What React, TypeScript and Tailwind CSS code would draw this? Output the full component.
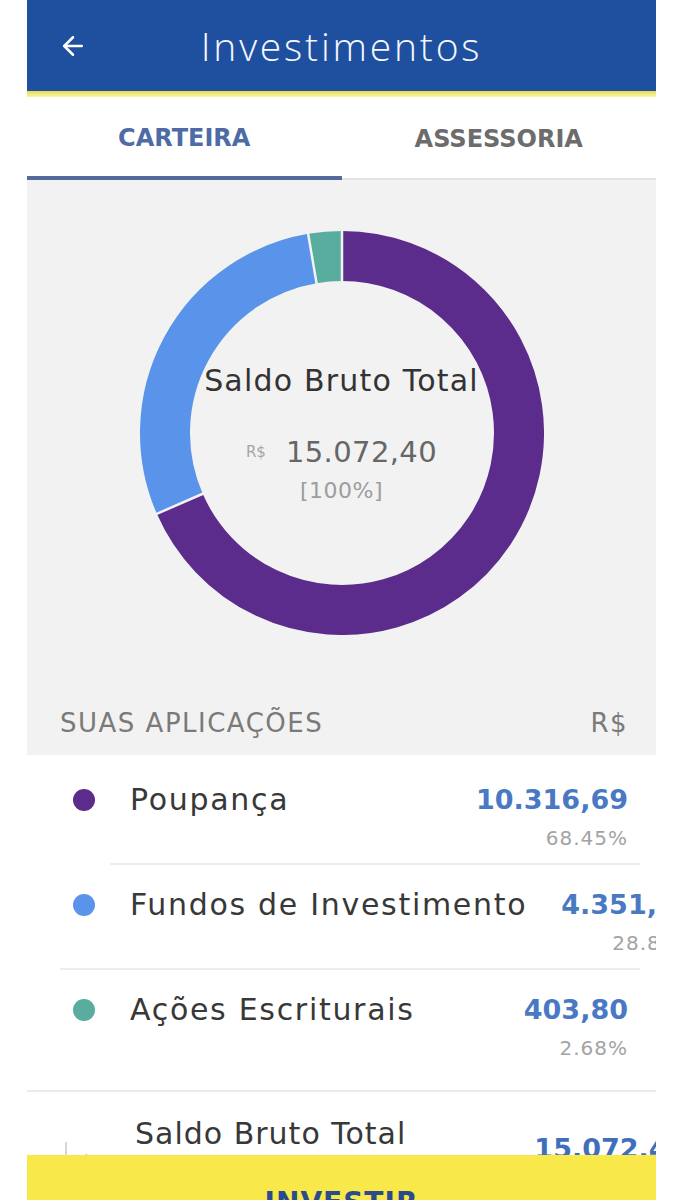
import { ArrowLeft } from "lucide-react";

const slices = [
  { name: "Poupança", color: "#5b2c8b", value: "10.316,69", pct: "68.45%", share: 68.45 },
  { name: "Fundos de Investimento", color: "#5a93ea", value: "4.351,91", pct: "28.87%", share: 28.87 },
  { name: "Ações Escriturais", color: "#58ad9f", value: "403,80", pct: "2.68%", share: 2.68 },
];

// angle in degrees, clockwise from 12 o'clock
function pt(c: number, r: number, a: number) {
  const rad = (a * Math.PI) / 180;
  return [c + r * Math.sin(rad), c - r * Math.cos(rad)];
}

function arc(c: number, r: number, a0: number, a1: number) {
  const [x0, y0] = pt(c, r, a0);
  const [x1, y1] = pt(c, r, a1);
  const large = a1 - a0 > 180 ? 1 : 0;
  return `M ${x0} ${y0} A ${r} ${r} 0 ${large} 1 ${x1} ${y1}`;
}

function Donut() {
  const size = 404;
  const c = size / 2;
  let start = 0;
  const segs = slices.map((s) => {
    const a0 = start;
    const a1 = start + (s.share / 100) * 360;
    start = a1;
    return { ...s, a0, a1 };
  });
  return (
    <svg width={size} height={size} viewBox={`0 0 ${size} ${size}`}>
      {segs.map((s) => (
        <path key={s.name} d={arc(c, 177, s.a0, s.a1)} stroke={s.color} strokeWidth={50} fill="none" />
      ))}
      {segs.map((s) => {
        const [x0, y0] = pt(c, 150, s.a0);
        const [x1, y1] = pt(c, 204, s.a0);
        return <line key={s.name + "-gap"} x1={x0} y1={y0} x2={x1} y2={y1} stroke="#f2f2f2" strokeWidth={2.5} />;
      })}
    </svg>
  );
}

function ChartIcon() {
  return (
    <svg width="30" height="34" viewBox="0 0 30 34" fill="none" stroke="#c9c9c9" strokeWidth="1.5">
      <path d="M4 2 V30 H28" />
      <path d="M6 24 L12 20 L17 22 L25 14" />
    </svg>
  );
}

export default function App() {
  return (
    <div className="min-h-screen bg-white">
      <div className="relative ml-[27px] h-[1200px] w-[629px] overflow-hidden bg-white font-['DejaVu_Sans',sans-serif]">
        {/* header */}
        <div className="relative flex h-[91px] items-center justify-center bg-[#1f4f9f]">
          <ArrowLeft className="absolute left-[31px] top-[31px] text-white" size={30} strokeWidth={2} />
          <h1 className="font-['Open_Sans',sans-serif] text-[39px] font-light leading-none tracking-[2.8px] text-[#f4f7fc]">
            Investimentos
          </h1>
        </div>
        <div className="h-[6px] bg-gradient-to-b from-[#e9dc3c] to-[#f8f3b0]" />

        {/* tabs */}
        <div className="flex h-[83px]">
          <div className="flex flex-1 flex-col">
            <div className="flex flex-1 items-center justify-center pt-[3px] text-[24px] font-bold text-[#4e6ba6]">
              CARTEIRA
            </div>
            <div className="h-[4px] bg-[#55699b]" />
          </div>
          <div className="flex flex-1 flex-col">
            <div className="flex flex-1 items-center justify-center pt-[3px] text-[24px] font-bold text-[#6c6c6c]">
              ASSESSORIA
            </div>
            <div className="h-[2px] bg-[#e3e3e3]" />
          </div>
        </div>

        {/* chart */}
        <div className="bg-[#f2f2f2] pb-[16px] pt-[51px]">
          <div className="relative mx-auto h-[404px] w-[404px]">
            <Donut />
            <div className="absolute inset-0 flex flex-col items-center justify-center">
              <div className="text-[30px] leading-[36px] tracking-[1.2px] text-[#333]">Saldo Bruto Total</div>
              <div className="mt-[36px] flex items-center gap-[20px] leading-[34px]">
                <span className="text-[15px] text-[#a5a5a5]">R$</span>
                <span className="text-[29px] tracking-[0.4px] text-[#666]">15.072,40</span>
              </div>
              <div className="mt-[9px] text-[22px] leading-[26px] tracking-[0.5px] text-[#9d9d9d]">[100%]</div>
            </div>
          </div>
          <div className="mt-[72px] flex items-center justify-between pl-[33px] pr-[28px] text-[26px] leading-[32px] tracking-[1.5px] text-[#7a7a7a]">
            <span>SUAS APLICAÇÕES</span>
            <span>R$</span>
          </div>
        </div>

        {/* list */}
        {slices.map((s, i) => (
          <div key={s.name}>
            <div
              className={
                "flex items-start pl-[46px] pr-[28px] " +
                (i === 0 ? "pt-[29px] pb-[14px]" : i === 1 ? "pt-[24px] pb-[14px]" : "pt-[24px] pb-[31px]")
              }
            >
              <span className="mt-[5px] h-[22px] w-[22px] shrink-0 rounded-full" style={{ backgroundColor: s.color }} />
              <span className="ml-[35px] shrink-0 whitespace-nowrap text-[30px] leading-[32px] tracking-[1.7px] text-[#383838]">
                {s.name}
              </span>
              <div className="ml-auto shrink-0 pl-[34px] text-right">
                <div className="whitespace-nowrap text-[27px] font-bold leading-[32px] text-[#4a79c4]">{s.value}</div>
                <div className="mt-[11px] whitespace-nowrap text-[20px] leading-[22px] tracking-[1px] text-[#a3a3a3]">{s.pct}</div>
              </div>
            </div>
            {i === 0 && <div className="ml-[83px] mr-[16px] h-[2px] bg-[#ececec]" />}
            {i === 1 && <div className="ml-[33px] mr-[16px] h-[2px] bg-[#ececec]" />}
            {i === 2 && <div className="h-[2px] bg-[#ebebeb]" />}
          </div>
        ))}

        {/* total row */}
        <div className="flex items-start pl-[35px] pt-[26px]">
          <div className="mt-[22px] shrink-0">
            <ChartIcon />
          </div>
          <span className="ml-[43px] shrink-0 whitespace-nowrap text-[30px] leading-[32px] tracking-[1px] text-[#383838]">
            Saldo Bruto Total
          </span>
          <span className="ml-[128px] mt-[15px] shrink-0 whitespace-nowrap text-[27px] font-bold leading-[32px] text-[#3f6fbb]">
            15.072,40
          </span>
        </div>

        {/* floating button */}
        <div className="absolute left-0 top-[1155px] h-[90px] w-full bg-[#f8e84a] pt-[34px] text-center">
          <span className="block text-[28px] font-bold leading-[28px] tracking-[1px] text-[#2b4b8c]">INVESTIR</span>
        </div>
      </div>
    </div>
  );
}
